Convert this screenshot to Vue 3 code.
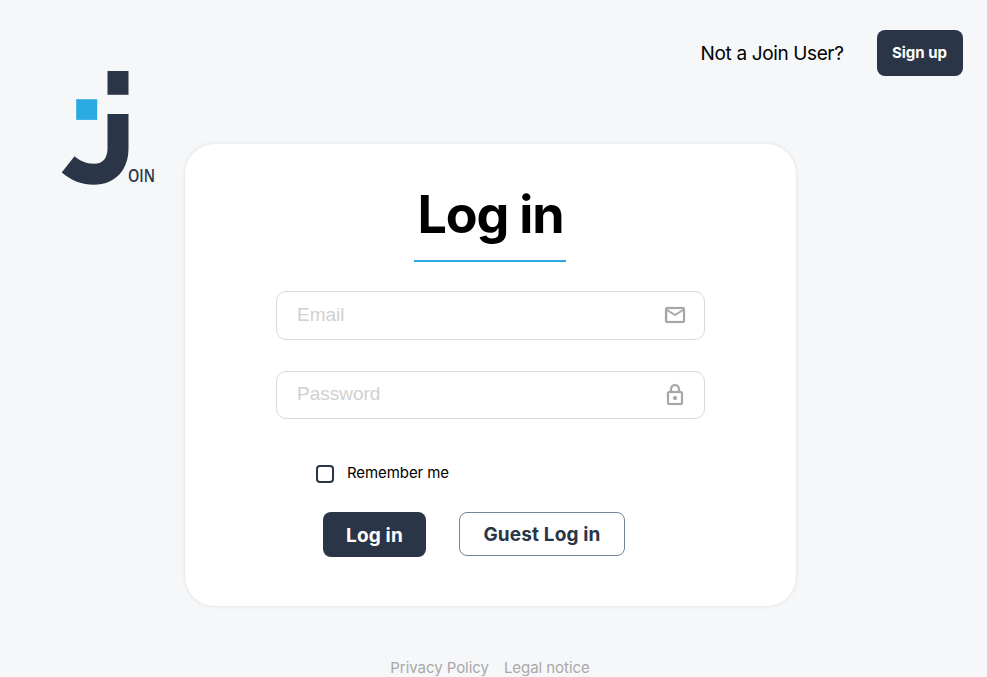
<script setup>
import { ref } from 'vue'

const email = ref('')
const password = ref('')
const remember = ref(false)
</script>

<template>
  <div class="page">
    <header class="header">
      <svg class="logo" viewBox="60 70 100 116" width="100" height="116" aria-label="Join">
        <path class="dark" d="M107.5 71h21v23.8h-21z" />
        <path class="blue" d="M76.2 99.2h21v20.7h-21z" />
        <path class="dark" d="M107.5 114h21v34.5c0 21-13 36.300-34.500 36.300c-12 0-22.800-4.300-32.300-12.300l12.800-16.200c5 4.300 11.300 7.500 19.500 7.500c9.500 0 13.500-6.500 13.500-15.300z" />
        <text class="logo-text" x="128" y="181.500" textLength="27" lengthAdjust="spacingAndGlyphs">OIN</text>
      </svg>
      <div class="signup">
        <span class="signup-text">Not a Join User?</span>
        <button class="signup-btn">Sign up</button>
      </div>
    </header>

    <main class="card">
      <h1 class="title">Log in</h1>
      <div class="rule"></div>
      <form class="form" @submit.prevent>
        <label class="field field-email">
          <input v-model="email" type="email" placeholder="Email" />
          <svg width="24" height="24" viewBox="0 0 24 24">
            <path d="M4 20q-.825 0-1.412-.587T2 18V6q0-.825.588-1.412T4 4h16q.825 0 1.413.588T22 6v12q0 .825-.587 1.413T20 20zm8-7L4 8v10h16V8zm0-2 8-5H4zM4 8V6v12z" />
          </svg>
        </label>
        <label class="field field-password">
          <input v-model="password" type="password" placeholder="Password" />
          <svg width="24" height="24" viewBox="0 0 24 24">
            <path d="M6 22q-.825 0-1.412-.587T4 20V10q0-.825.588-1.412T6 8h1V6q0-2.075 1.463-3.537T12 1t3.538 1.463T17 6v2h1q.825 0 1.413.588T20 10v10q0 .825-.587 1.413T18 22zm0-2h12V10H6zm6-3q.825 0 1.413-.587T14 15t-.587-1.412T12 13t-1.412.588T10 15t.588 1.413T12 17M9 8h6V6q0-1.250-.875-2.125T12 3t-2.125.875T9 6z" />
          </svg>
        </label>
        <label class="remember">
          <input v-model="remember" type="checkbox" />
          <span>Remember me</span>
        </label>
        <div class="actions">
          <button class="login">Log in</button>
          <button class="guest" type="button">Guest Log in</button>
        </div>
      </form>
    </main>

    <footer class="footer">
      <a>Privacy Policy</a>
      <a>Legal notice</a>
    </footer>
  </div>
</template>

<style>
body {
  background: #f6f7f9;
  overflow: hidden;
}
</style>

<style scoped>
.page {
  box-sizing: border-box;
  display: flex;
  flex-direction: column;
  height: 677px;
  overflow: hidden;
  background: #f6f7f9;
  font-family: Inter, sans-serif;
  color: #000;
}
.header {
  display: flex;
  flex: none;
  justify-content: space-between;
  align-items: flex-start;
  height: 144px;
  box-sizing: border-box;
  padding: 30px 24.500px 0 60px;
}
.logo {
  flex: none;
  margin-top: 40px;
}
.dark { fill: #2a3647; }
.blue { fill: #29abe2; }
.logo-text {
  fill: #2a3647;
  font: 600 17.500px "Open Sans", sans-serif;
}
.signup {
  display: flex;
  align-items: center;
  gap: 33px;
}
.signup-text {
  padding-top: 2px;
  font-size: 19px;
  line-height: 44px;
  letter-spacing: -0.370px;
}
button {
  box-sizing: border-box;
  border: 0;
  padding: 0;
  font-family: inherit;
  font-weight: 700;
  border-radius: 8px;
  background: #2a3647;
  color: #fff;
}
.signup-btn {
  width: 86px;
  height: 46px;
  padding-bottom: 1px;
  font-size: 15px;
}
.card {
  box-sizing: border-box;
  display: flex;
  flex: none;
  flex-direction: column;
  align-items: center;
  width: 611px;
  height: 462px;
  margin-left: 185px;
  padding-top: 40px;
  border-radius: 30px;
  background: #fff;
  box-shadow: 0 0 4px rgba(0, 0, 0, 0.1);
}
.title {
  margin: 0;
  font-size: 52px;
  font-weight: 700;
  line-height: 62px;
  letter-spacing: -1.150px;
}
.rule {
  width: 152px;
  height: 2px;
  margin: 14px 1px 29px 0;
  background: #29abe2;
}
.form {
  width: 429px;
}
.field {
  box-sizing: border-box;
  display: flex;
  align-items: center;
  height: 49px;
  padding: 0 17px 0 20px;
  border: 1px solid #d9d9d9;
  border-radius: 10px;
}
.field-password {
  height: 48px;
  margin-top: 31px;
}
.field input {
  flex: 1;
  min-width: 0;
  padding: 0 0 2px;
  border: 0;
  outline: 0;
  background: none;
  font: 19px "Liberation Sans", Arial, sans-serif;
}
.field input::placeholder { color: #d1d1d1; }
.field svg {
  flex: none;
  fill: #a8a8a8;
  stroke: #a8a8a8;
  stroke-width: 0.200px;
}
.field-email svg { margin-bottom: 2px; }
.remember {
  display: flex;
  align-items: center;
  gap: 13px;
  margin: 44px 0 0 40px;
  height: 20px;
  font-size: 15px;
  letter-spacing: -0.080px;
}
.remember span { padding-bottom: 1px; }
.remember input {
  appearance: none;
  box-sizing: border-box;
  width: 18px;
  height: 18px;
  margin: 2px 0 0;
  border: 2px solid #2a3647;
  border-radius: 4px;
}
.actions {
  display: flex;
  gap: 33px;
  margin: 29px 0 0 47px;
}
.login {
  width: 103px;
  height: 45px;
  padding-top: 2px;
  font-size: 19px;
  letter-spacing: 0.150px;
}
.guest {
  width: 166px;
  height: 44px;
  border: 1px solid #728596;
  background: #fff;
  color: #2a3647;
  font-size: 19px;
  letter-spacing: 0.150px;
}
.footer {
  display: flex;
  justify-content: center;
  gap: 15px;
  padding: 52px 7px 0 0;
  font-size: 15px;
  line-height: 20px;
  letter-spacing: -0.050px;
  color: #a8a8a8;
}
</style>
